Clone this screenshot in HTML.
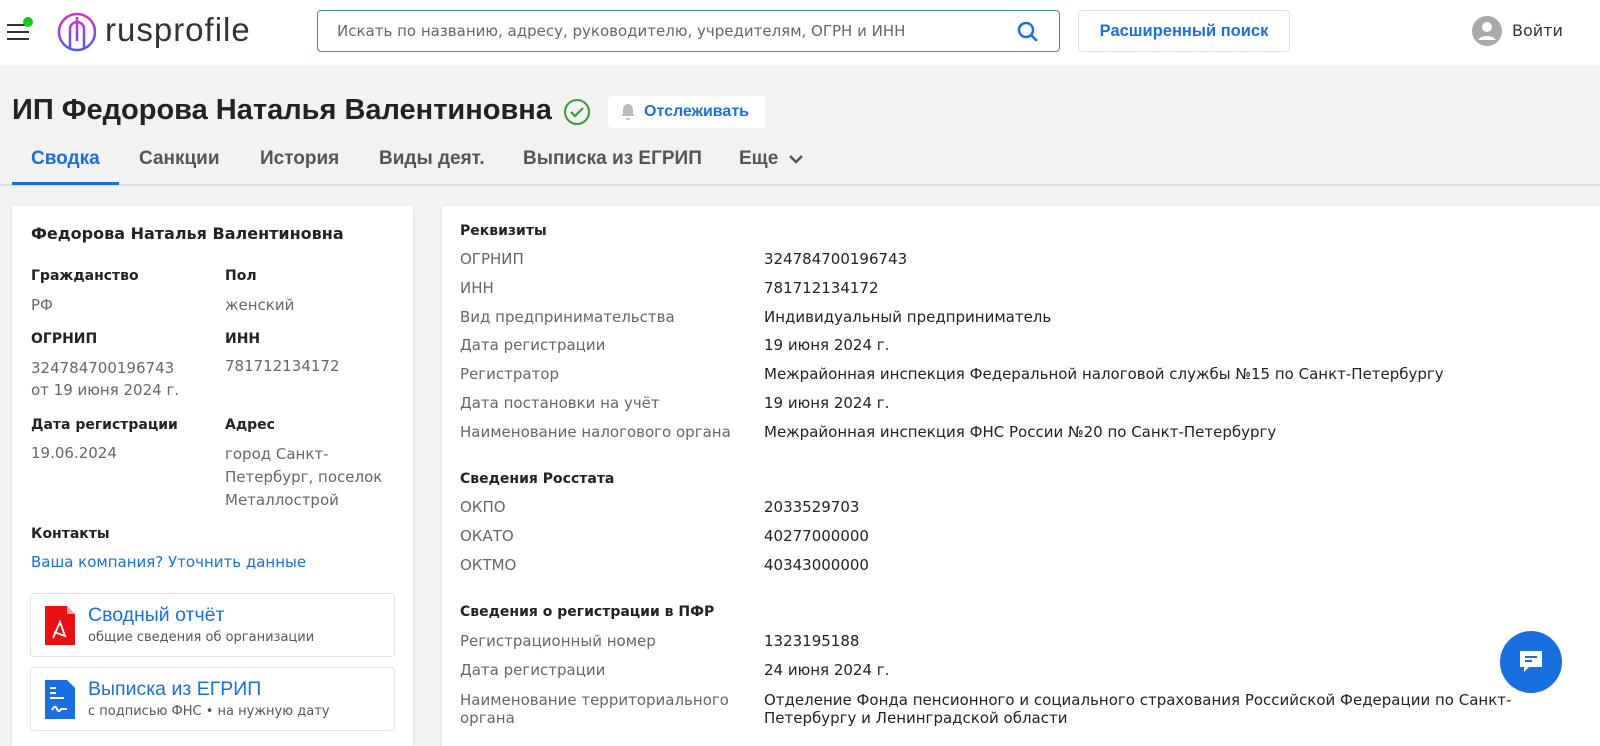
<!DOCTYPE html>
<html><head><meta charset="utf-8"><style>
*{box-sizing:border-box;margin:0;padding:0}
body{width:1600px;height:737px;overflow:hidden;background:#f2f2f2;font-family:"DejaVu Sans",sans-serif;color:#222;position:relative}
.hdr{position:absolute;left:0;top:0;width:1600px;height:65px;background:#fff}
.abs{position:absolute}
.lbl{color:#666;font-size:15px}
.val{color:#222;font-size:15px}
.h{font-weight:bold;font-size:14px;color:#222}
.ls{font-family:"Liberation Sans",sans-serif}
</style></head><body>
<div class="hdr">
 <div class="abs" style="left:7px;top:24px;width:22px;height:2px;background:#333"></div>
 <div class="abs" style="left:7px;top:31px;width:22px;height:2px;background:#333"></div>
 <div class="abs" style="left:7px;top:38px;width:22px;height:2px;background:#333"></div>
 <div class="abs" style="left:23px;top:17px;width:10px;height:10px;border-radius:50%;background:#1ec81e"></div>
 <svg class="abs" style="left:56px;top:11px" width="42" height="42" viewBox="0 0 42 42"><defs><linearGradient id="g" x1="0" y1="0" x2="0" y2="1"><stop offset="0" stop-color="#e02ad0"/><stop offset="1" stop-color="#4a5ee8"/></linearGradient></defs><circle cx="21" cy="21" r="18" fill="none" stroke="url(#g)" stroke-width="2.5"/><path d="M14 38 V18 a7 7 0 0 1 14 0 V38 M21 6 V30" fill="none" stroke="url(#g)" stroke-width="2.5"/></svg>
 <div class="abs ls" style="left:105px;top:11px;font-size:33px;color:#333;letter-spacing:1px">rusprofile</div>
 <div class="abs" style="left:317px;top:10px;width:743px;height:42px;border:1px solid #4a7fe0;border-radius:4px;background:#fff"><span class="abs" style="left:19px;top:11px;font-size:15px;color:#666">Искать по названию, адресу, руководителю, учредителям, ОГРН и ИНН</span>
  <svg class="abs" style="left:698px;top:9px" width="24" height="24" viewBox="0 0 24 24"><circle cx="10" cy="10" r="7" fill="none" stroke="#1a6fe0" stroke-width="2.5"/><path d="M15 15 L21 21" stroke="#1a6fe0" stroke-width="2.5"/></svg></div>
 <div class="abs ls" style="left:1078px;top:10px;width:212px;height:42px;border:1px solid #ddd;border-radius:4px;text-align:center;line-height:40px;font-size:16.5px;font-weight:bold;color:#1a6fe0">Расширенный поиск</div>
 <svg class="abs" style="left:1472px;top:16px" width="30" height="30" viewBox="0 0 30 30"><circle cx="15" cy="15" r="15" fill="#aaa"/><circle cx="15" cy="11" r="5" fill="#fff"/><path d="M6 24 a10 7 0 0 1 18 0z" fill="#fff"/></svg>
 <div class="abs" style="left:1512px;top:21px;font-size:16px;color:#333">Войти</div>
</div>
<div class="abs ls" style="left:12px;top:94px;font-size:29px;font-weight:bold;color:#222">ИП Федорова Наталья Валентиновна</div>
<svg class="abs" style="left:563px;top:98px" width="28" height="28" viewBox="0 0 28 28"><circle cx="14" cy="14" r="12" fill="none" stroke="#3a9a3a" stroke-width="2"/><path d="M8 14 l4 4 l8 -8" fill="none" stroke="#3a9a3a" stroke-width="2.2"/></svg>
<div class="abs" style="left:608px;top:96px;width:157px;height:32px;background:#fff;border-radius:4px"><svg class="abs" style="left:11px;top:7px" width="18" height="18" viewBox="0 0 18 18"><path d="M9 1 a5 5 0 0 1 5 5 v5 l2 2 H2 l2 -2 V6 a5 5 0 0 1 5 -5z M7 15 h4 a2 2 0 0 1 -4 0z" fill="#bbb"/></svg><span class="abs ls" style="left:36px;top:7px;font-size:16px;font-weight:bold;color:#1a6fe0">Отслеживать</span></div>
<div class="abs" style="left:0;top:184px;width:1600px;height:2px;background:#ddd"></div>
<div class="abs" style="left:12px;top:182px;width:107px;height:3px;background:#1a6fe0"></div>
<div class="abs ls" style="left:31px;top:148px;font-size:19px;font-weight:bold;color:#1a6fe0">Сводка</div>
<div class="abs ls" style="left:139px;top:148px;font-size:19px;font-weight:bold;color:#555">Санкции</div>
<div class="abs ls" style="left:260px;top:148px;font-size:19px;font-weight:bold;color:#555">История</div>
<div class="abs ls" style="left:379px;top:148px;font-size:19px;font-weight:bold;color:#555">Виды деят.</div>
<div class="abs ls" style="left:523px;top:148px;font-size:19px;font-weight:bold;color:#555">Выписка из ЕГРИП</div>
<div class="abs ls" style="left:739px;top:148px;font-size:19px;font-weight:bold;color:#555">Еще</div>
<svg class="abs" style="left:788px;top:153px" width="16" height="12" viewBox="0 0 16 12"><path d="M2 3 l6 6 l6 -6" fill="none" stroke="#555" stroke-width="2.5"/></svg>

<div class="abs" style="left:12px;top:206px;width:401px;height:540px;background:#fff;box-shadow:0 1px 3px rgba(0,0,0,.1)">
 <div class="abs" style="left:19px;top:18px;font-size:16px;font-weight:bold">Федорова Наталья Валентиновна</div>
 <div class="abs h" style="left:19px;top:62px">Гражданство</div><div class="abs lbl" style="left:19px;top:90px">РФ</div>
 <div class="abs h" style="left:213px;top:62px">Пол</div><div class="abs lbl" style="left:213px;top:90px">женский</div>
 <div class="abs h" style="left:19px;top:125px">ОГРНИП</div><div class="abs lbl" style="left:19px;top:151px;line-height:22px">324784700196743<br>от 19 июня 2024 г.</div>
 <div class="abs h" style="left:213px;top:125px">ИНН</div><div class="abs lbl" style="left:213px;top:151px">781712134172</div>
 <div class="abs h" style="left:19px;top:211px">Дата регистрации</div><div class="abs lbl" style="left:19px;top:238px">19.06.2024</div>
 <div class="abs h" style="left:213px;top:211px">Адрес</div><div class="abs lbl" style="left:213px;top:237px;line-height:23px">город Санкт-<br>Петербург, поселок<br>Металлострой</div>
 <div class="abs h" style="left:19px;top:320px">Контакты</div>
 <div class="abs" style="left:19px;top:347px;font-size:15px;color:#1a6fe0">Ваша компания? Уточнить данные</div>
 <div class="abs" style="left:18px;top:387px;width:365px;height:64px;border:1px solid #e2e2e2;border-radius:4px">
  <svg class="abs" style="left:14px;top:12px" width="32" height="40" viewBox="0 0 32 40"><path d="M0 0 H22 L30 8 V39 H0z" fill="#e81010"/><path d="M22 0 V8 H30" fill="#fff" opacity=".6"/><path d="M8 32 L15 16 L20 30 L9 26" fill="none" stroke="#fff" stroke-width="1.8"/></svg>
  <div class="abs ls" style="left:57px;top:10px;font-size:19.5px;color:#1a6fe0">Сводный отчёт</div>
  <div class="abs" style="left:57px;top:36px;font-size:13px;color:#555">общие сведения об организации</div>
 </div>
 <div class="abs" style="left:18px;top:461px;width:365px;height:64px;border:1px solid #e2e2e2;border-radius:4px">
  <svg class="abs" style="left:14px;top:12px" width="32" height="40" viewBox="0 0 32 40"><path d="M0 0 H22 L30 8 V39 H0z" fill="#1a6fe0"/><path d="M5 8h6M5 13h6M5 18h14M7 30 q3 -6 5 -1 q2 4 4 0 h6" fill="none" stroke="#fff" stroke-width="2"/></svg>
  <div class="abs ls" style="left:57px;top:10px;font-size:19.5px;color:#1a6fe0">Выписка из ЕГРИП</div>
  <div class="abs" style="left:57px;top:36px;font-size:13px;color:#555">с подписью ФНС • на нужную дату</div>
 </div>
</div>

<div class="abs" style="left:442px;top:206px;width:1170px;height:540px;background:#fff;box-shadow:0 1px 3px rgba(0,0,0,.1)">
 <div class="abs h" style="left:18px;top:17px">Реквизиты</div>
 <div class="abs" style="left:18px;top:39px;line-height:28.8px" >
  <div class="lbl">ОГРНИП</div><div class="lbl">ИНН</div><div class="lbl">Вид предпринимательства</div><div class="lbl">Дата регистрации</div><div class="lbl">Регистратор</div><div class="lbl">Дата постановки на учёт</div><div class="lbl">Наименование налогового органа</div></div>
 <div class="abs" style="left:322px;top:39px;line-height:28.8px">
  <div class="val">324784700196743</div><div class="val">781712134172</div><div class="val">Индивидуальный предприниматель</div><div class="val">19 июня 2024 г.</div><div class="val">Межрайонная инспекция Федеральной налоговой службы №15 по Санкт-Петербургу</div><div class="val">19 июня 2024 г.</div><div class="val">Межрайонная инспекция ФНС России №20 по Санкт-Петербургу</div></div>
 <div class="abs h" style="left:18px;top:265px">Сведения Росстата</div>
 <div class="abs" style="left:18px;top:287px;line-height:28.8px"><div class="lbl">ОКПО</div><div class="lbl">ОКАТО</div><div class="lbl">ОКТМО</div></div>
 <div class="abs" style="left:322px;top:287px;line-height:28.8px"><div class="val">2033529703</div><div class="val">40277000000</div><div class="val">40343000000</div></div>
 <div class="abs h" style="left:18px;top:398px">Сведения о регистрации в ПФР</div>
 <div class="abs" style="left:18px;top:421px;line-height:28.8px"><div class="lbl">Регистрационный номер</div><div class="lbl">Дата регистрации</div><div class="lbl" style="line-height:18px;margin-top:6px">Наименование территориального<br>органа</div></div>
 <div class="abs" style="left:322px;top:421px;line-height:28.8px"><div class="val">1323195188</div><div class="val">24 июня 2024 г.</div><div class="val" style="line-height:18px;margin-top:6px">Отделение Фонда пенсионного и социального страхования Российской Федерации по Санкт-<br>Петербургу и Ленинградской области</div></div>
</div>
<div class="abs" style="left:1500px;top:631px;width:62px;height:62px;border-radius:50%;background:#1a6fe0"><svg class="abs" style="left:17px;top:17px" width="28" height="28" viewBox="0 0 28 28"><path d="M3 3 H25 V19 H12 L7 24 V19 H3z" fill="#fff"/><path d="M8 9h12M8 13h7" stroke="#1a6fe0" stroke-width="2"/></svg></div>
</body></html>
